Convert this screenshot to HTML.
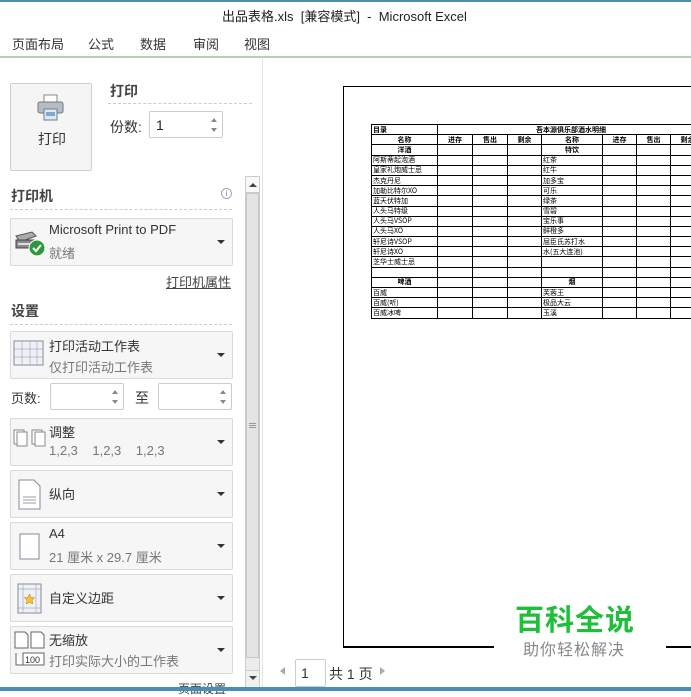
<!DOCTYPE html>
<html><head><meta charset="utf-8">
<style>
*{margin:0;padding:0;box-sizing:border-box}
body{width:691px;height:691px;overflow:hidden;background:#fff;position:relative;font-family:"Liberation Sans","Noto Sans CJK SC",sans-serif;color:#333}
.a{position:absolute}
.box{position:absolute;left:10px;width:223px;background:#f6f6f6;border:1px solid #dadada;border-radius:2px}
.dd{position:absolute;right:7px;top:50%;margin-top:-2px;width:0;height:0;border-left:4px solid transparent;border-right:4px solid transparent;border-top:4px solid #333}
.t1{position:absolute;left:38px;font-size:13px;color:#333}
.t2{position:absolute;left:38px;font-size:13px;color:#777}
.h{font-size:14px;font-weight:bold;color:#444}
.dash{position:absolute;border-top:1px dashed #ccc}
table{border-collapse:collapse;font-size:7px;font-family:"Noto Sans CJK SC",sans-serif;table-layout:fixed}
td{border:1px solid #000;height:10.2px;line-height:8px;padding:0 1px;white-space:nowrap;overflow:hidden;color:#000}
.c{text-align:center;font-weight:bold}
.spin{position:absolute;background:#fff;border:1px solid #ccc;border-radius:2px}
.up{position:absolute;right:5px;width:0;height:0;border-left:3px solid transparent;border-right:3px solid transparent;border-bottom:4px solid #888}
.dn{position:absolute;right:5px;width:0;height:0;border-left:3px solid transparent;border-right:3px solid transparent;border-top:4px solid #888}
</style></head><body>
<div class="a" style="left:0;top:0;width:691px;height:2px;background:#4a8fb0"></div>
<div class="a" style="left:222px;top:6px;font-size:13px;color:#222;white-space:nowrap">出品表格.xls &nbsp;[兼容模式] &nbsp;- &nbsp;Microsoft Excel</div>
<div class="a" style="left:12px;top:34px;font-size:13px;color:#333">页面布局</div>
<div class="a" style="left:88px;top:34px;font-size:13px">公式</div>
<div class="a" style="left:140px;top:34px;font-size:13px">数据</div>
<div class="a" style="left:193px;top:34px;font-size:13px">审阅</div>
<div class="a" style="left:244px;top:34px;font-size:13px">视图</div>
<div class="a" style="left:0;top:56px;width:691px;height:2px;background:#b8cdb8"></div>

<div class="a" style="left:10px;top:83px;width:82px;height:88px;background:#f5f5f5;border:1px solid #cfcfcf;border-radius:2px"></div>
<svg class="a" style="left:36px;top:94px" width="30" height="30" viewBox="0 0 30 30"><rect x="8" y="1" width="13" height="8" fill="#fff" stroke="#888"/><rect x="2" y="8" width="25" height="11" rx="2" fill="#b5bcc4" stroke="#777"/><rect x="8" y="15" width="13" height="11" fill="#dfe8f2" stroke="#6a7d90"/><rect x="10" y="18" width="9" height="4" fill="#7fa8d0"/></svg>
<div class="a" style="left:38px;top:129px;font-size:14px">打印</div>
<div class="a h" style="left:110px;top:81px">打印</div>
<div class="dash" style="left:108px;top:103px;width:144px"></div>
<div class="a" style="left:110px;top:117px;font-size:14px">份数:</div>
<div class="spin" style="left:149px;top:111px;width:74px;height:27px"><span class="a" style="left:6px;top:5px;font-size:14px;color:#222">1</span><div class="up" style="top:6px"></div><div class="dn" style="top:16px"></div></div>

<div class="a h" style="left:11px;top:186px">打印机</div>
<div class="a" style="left:221px;top:188px;width:11px;height:11px;border:1px solid #9ab;border-radius:50%;font-size:8px;color:#68a;text-align:center;line-height:9px">i</div>
<div class="dash" style="left:10px;top:209px;width:222px"></div>
<div class="box" style="top:218px;height:48px"><div class="dd"></div>
<svg class="a" style="left:3px;top:11px" width="32" height="28" viewBox="0 0 32 28"><path d="M2 6 L18 2 L22 6 L6 12Z" fill="#aaa" stroke="#555"/><rect x="2" y="10" width="18" height="8" fill="#888" stroke="#444"/><rect x="4" y="13" width="14" height="2" fill="#ddd"/><circle cx="23" cy="18" r="8" fill="#2c9a3c" stroke="#fff"/><path d="M19 18 l3 3 l5 -6" stroke="#fff" stroke-width="2" fill="none"/></svg>
<div class="t1" style="top:3px">Microsoft Print to PDF</div><div class="t2" style="top:24px">就绪</div></div>
<div class="a" style="left:166px;top:272px;font-size:13px;color:#444;text-decoration:underline">打印机属性</div>

<div class="a h" style="left:11px;top:301px">设置</div>
<div class="dash" style="left:10px;top:324px;width:222px"></div>
<div class="box" style="top:331px;height:48px"><div class="dd"></div>
<svg class="a" style="left:2px;top:8px" width="32" height="30"><rect x="1" y="1" width="29" height="24" fill="#eef2f7" stroke="#889"/><path d="M1 9H30M1 17H30M9 1V25M17 1V25M24 1V25" stroke="#aab" stroke-width=".7"/></svg>
<div class="t1" style="top:4px">打印活动工作表</div><div class="t2" style="top:25px">仅打印活动工作表</div></div>

<div class="a" style="left:11px;top:388px;font-size:13px">页数:</div>
<div class="spin" style="left:50px;top:383px;width:74px;height:27px"><div class="up" style="top:6px"></div><div class="dn" style="top:16px"></div></div>
<div class="a" style="left:135px;top:388px;font-size:14px">至</div>
<div class="spin" style="left:158px;top:383px;width:74px;height:27px"><div class="up" style="top:6px"></div><div class="dn" style="top:16px"></div></div>

<div class="box" style="top:418px;height:48px"><div class="dd"></div>
<svg class="a" style="left:2px;top:8px" width="34" height="24"><g fill="#fff" stroke="#888"><rect x="1" y="3" width="10" height="14"/><rect x="4" y="5" width="10" height="14"/><rect x="19" y="3" width="10" height="14"/><rect x="22" y="5" width="10" height="14"/></g></svg>
<div class="t1" style="top:3px">调整</div><div class="t2" style="top:24px">1,2,3 &nbsp;&nbsp; 1,2,3 &nbsp;&nbsp; 1,2,3</div></div>

<div class="box" style="top:470px;height:48px"><div class="dd"></div>
<svg class="a" style="left:7px;top:8px" width="24" height="32"><path d="M1 1H16L22 7V30H1Z" fill="#fff" stroke="#889"/><path d="M5 18H18M5 21H18M5 24H18" stroke="#99a"/></svg>
<div class="t1" style="top:13px">纵向</div></div>

<div class="box" style="top:522px;height:48px"><div class="dd"></div>
<svg class="a" style="left:8px;top:10px" width="22" height="28"><rect x="1" y="1" width="19" height="25" fill="#fff" stroke="#889"/></svg>
<div class="t1" style="top:3px">A4</div><div class="t2" style="top:24px">21 厘米 x 29.7 厘米</div></div>

<div class="box" style="top:574px;height:48px"><div class="dd"></div>
<svg class="a" style="left:6px;top:8px" width="26" height="32"><rect x="1" y="1" width="23" height="29" fill="#eef2f7" stroke="#889"/><path d="M6 1V30M19 1V30M1 6H24M1 25H24" stroke="#aab" stroke-width=".7"/><path d="M12.5 11l1.6 3.3 3.6.5-2.6 2.5.6 3.6-3.2-1.7-3.2 1.7.6-3.6-2.6-2.5 3.6-.5z" fill="#f4c430" stroke="#b08000" stroke-width=".5"/></svg>
<div class="t1" style="top:13px">自定义边距</div></div>

<div class="box" style="top:626px;height:48px"><div class="dd"></div>
<svg class="a" style="left:2px;top:2px" width="34" height="42"><g fill="#fff" stroke="#666"><path d="M2 3H12L15 6V19H2Z"/><path d="M18 3H28L31 6V19H18Z"/><rect x="10" y="24" width="21" height="12"/><path d="M3 24V36H10"/></g><text x="12" y="34" font-size="9" font-family="Liberation Sans" fill="#333">100</text></svg>
<div class="t1" style="top:3px">无缩放</div><div class="t2" style="top:24px">打印实际大小的工作表</div></div>
<div class="a" style="left:178px;top:680px;font-size:12px;color:#444">页面设置</div>

<div class="a" style="left:245px;top:176px;width:15px;height:512px;background:#ececec;border:1px solid #ccc"></div>
<div class="a" style="left:246px;top:177px;width:13px;height:16px;background:#f8f8f8;border-bottom:1px solid #ccc"></div>
<div class="a" style="left:249px;top:183px;border-left:4px solid transparent;border-right:4px solid transparent;border-bottom:4px solid #444"></div>
<div class="a" style="left:246px;top:193px;width:13px;height:465px;background:#e4e4e4;border:1px solid #c8c8c8"></div>
<div class="a" style="left:249px;top:423px;width:7px;height:5px;border-top:1px solid #999;border-bottom:1px solid #999"></div>
<div class="a" style="left:249px;top:425px;width:7px;height:1px;background:#999"></div>
<div class="a" style="left:246px;top:670px;width:13px;height:17px;background:#f0f0f0;border-top:1px solid #ccc"></div>
<div class="a" style="left:249px;top:676px;border-left:4px solid transparent;border-right:4px solid transparent;border-top:4px solid #444"></div>
<div class="a" style="left:262px;top:59px;width:1px;height:628px;background:#e2e2e2"></div>

<div class="a" style="left:343px;top:86px;width:360px;height:562px;border-left:1px solid #000;border-top:1px solid #000;border-bottom:2px solid #000;overflow:hidden">
<table class="a" style="left:27px;top:37px;width:333px">
<colgroup><col style="width:66px"><col style="width:35px"><col style="width:35px"><col style="width:34px"><col style="width:61px"><col style="width:34px"><col style="width:34px"><col style="width:34px"></colgroup>
<tr><td style="font-weight:bold">目录</td><td colspan="7" class="c">吾本源俱乐部酒水明细</td></tr>
<tr><td class="c">名称</td><td class="c">进存</td><td class="c">售出</td><td class="c">剩余</td><td class="c">名称</td><td class="c">进存</td><td class="c">售出</td><td class="c">剩余</td></tr>
<tr><td class="c">洋酒</td><td></td><td></td><td></td><td class="c">特饮</td><td></td><td></td><td></td></tr>
<tr><td>阿斯蒂起泡酒</td><td></td><td></td><td></td><td>红茶</td><td></td><td></td><td></td></tr>
<tr><td>皇家礼炮威士忌</td><td></td><td></td><td></td><td>红牛</td><td></td><td></td><td></td></tr>
<tr><td>杰克丹尼</td><td></td><td></td><td></td><td>加多宝</td><td></td><td></td><td></td></tr>
<tr><td>加勒比特尔XO</td><td></td><td></td><td></td><td>可乐</td><td></td><td></td><td></td></tr>
<tr><td>蓝天伏特加</td><td></td><td></td><td></td><td>绿茶</td><td></td><td></td><td></td></tr>
<tr><td>人头马特级</td><td></td><td></td><td></td><td>雪碧</td><td></td><td></td><td></td></tr>
<tr><td>人头马VSOP</td><td></td><td></td><td></td><td>宝乐事</td><td></td><td></td><td></td></tr>
<tr><td>人头马XO</td><td></td><td></td><td></td><td>鲜橙多</td><td></td><td></td><td></td></tr>
<tr><td>轩尼诗VSOP</td><td></td><td></td><td></td><td>屈臣氏苏打水</td><td></td><td></td><td></td></tr>
<tr><td>轩尼诗XO</td><td></td><td></td><td></td><td>水(五大连池)</td><td></td><td></td><td></td></tr>
<tr><td>芝华士威士忌</td><td></td><td></td><td></td><td></td><td></td><td></td><td></td></tr>
<tr><td></td><td></td><td></td><td></td><td></td><td></td><td></td><td></td></tr>
<tr><td class="c">啤酒</td><td></td><td></td><td></td><td class="c">烟</td><td></td><td></td><td></td></tr>
<tr><td>百威</td><td></td><td></td><td></td><td>芙蓉王</td><td></td><td></td><td></td></tr>
<tr><td>百威(听)</td><td></td><td></td><td></td><td>极品大云</td><td></td><td></td><td></td></tr>
<tr><td>百威冰啤</td><td></td><td></td><td></td><td>玉溪</td><td></td><td></td><td></td></tr>
</table>
</div>

<div class="a" style="left:494px;top:592px;width:172px;height:70px;background:#fff"></div>
<div class="a" style="left:515px;top:597px;font-size:29px;font-weight:bold;color:#1fbf3b;letter-spacing:1px">百科全说</div>
<div class="a" style="left:523px;top:636px;font-size:16px;color:#888;letter-spacing:1px">助你轻松解决</div>

<div class="a" style="left:280px;top:667px;border-top:4px solid transparent;border-bottom:4px solid transparent;border-right:5px solid #aaa"></div>
<div class="a" style="left:295px;top:659px;width:31px;height:28px;border:1px solid #ccc;border-radius:2px;font-size:14px;padding:5px 0 0 5px">1</div>
<div class="a" style="left:329px;top:664px;font-size:14px">共 1 页</div>
<div class="a" style="left:380px;top:667px;border-top:4px solid transparent;border-bottom:4px solid transparent;border-left:5px solid #aaa"></div>

<div class="a" style="left:0;top:687px;width:691px;height:4px;background:#4a8fb0"></div>
</body></html>
